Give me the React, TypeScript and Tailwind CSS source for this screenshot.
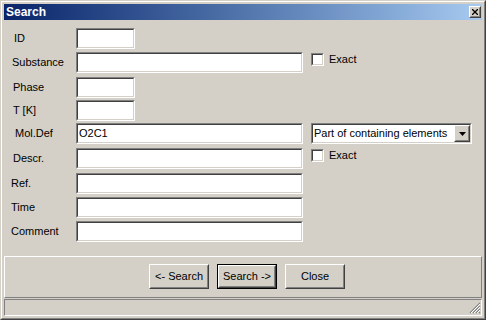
import type { ReactNode } from "react";

const font = "font-['Liberation_Sans',Arial,sans-serif] text-[11px] text-black";

type Row = {
  label: string;
  lp: string;
  mt: string;
  wide: boolean;
  value?: string;
  extra?: "exact" | "select";
};

const rows: Row[] = [
  { label: "ID", lp: "pl-[10px]", mt: "mt-[8px]", wide: false },
  { label: "Substance", lp: "pl-[8px]", mt: "mt-[3px]", wide: true, extra: "exact" },
  { label: "Phase", lp: "pl-[9px]", mt: "mt-[4px]", wide: false },
  { label: "T [K]", lp: "pl-[9px]", mt: "mt-[2px]", wide: false },
  { label: "Mol.Def", lp: "pl-[11px]", mt: "mt-[2px]", wide: true, value: "O2C1", extra: "select" },
  { label: "Descr.", lp: "pl-[9px]", mt: "mt-[4px]", wide: true, extra: "exact" },
  { label: "Ref.", lp: "pl-[7px]", mt: "mt-[4px]", wide: true },
  { label: "Time", lp: "pl-[7px]", mt: "mt-[3px]", wide: true },
  { label: "Comment", lp: "pl-[7px]", mt: "mt-[3px]", wide: true },
];

function Sunken({ className, children }: { className: string; children?: ReactNode }) {
  return (
    <div className={`${className} border border-t-[#808080] border-l-[#808080] border-b-white border-r-white`}>
      <div className="h-full border border-t-[#404040] border-l-[#404040] border-b-[#d4d0c8] border-r-[#d4d0c8] bg-white">
        {children}
      </div>
    </div>
  );
}

function Raised({ className, children }: { className: string; children?: ReactNode }) {
  return (
    <div className={`${className} border border-t-white border-l-white border-b-[#404040] border-r-[#404040] bg-[#d4d0c8]`}>
      <div className="h-full border border-t-[#d4d0c8] border-l-[#d4d0c8] border-b-[#808080] border-r-[#808080] flex items-center justify-center">
        {children}
      </div>
    </div>
  );
}

function Exact() {
  return (
    <div className="flex items-center self-start mt-[1px] ml-[8px]">
      <Sunken className="w-[13px] h-[13px]" />
      <span className="ml-[5px] leading-[13px]">Exact</span>
    </div>
  );
}

function Select() {
  return (
    <Sunken className="ml-[8px] w-[161px] h-[21px]">
      <div className="flex h-full">
        <span className="flex-1 pl-[1px] leading-[17px]">Part of containing elements</span>
        <Raised className="w-[16px] h-[17px]">
          <svg width="7" height="4" viewBox="0 0 7 4">
            <path d="M0 0h7L3.5 4z" fill="#000" />
          </svg>
        </Raised>
      </div>
    </Sunken>
  );
}

function FormRow({ row }: { row: Row }) {
  return (
    <div className={`flex items-center h-[21px] ${row.mt}`}>
      <div className={`w-[72px] shrink-0 ${row.lp}`}>{row.label}</div>
      <Sunken className={row.wide ? "w-[227px] h-[21px]" : "w-[59px] h-[21px]"}>
        <div className="pl-[1px] leading-[17px]">{row.value}</div>
      </Sunken>
      {row.extra === "exact" && <Exact />}
      {row.extra === "select" && <Select />}
    </div>
  );
}

function Grip() {
  return (
    <svg width="12" height="12" viewBox="0 0 12 12" className="self-end mb-[1px]">
      <path d="M11 1L1 11M11 4L4 11M11 7L7 11M11 10L10 11" stroke="#808080" strokeWidth="1.2" />
      <path d="M11 2L2 11M11 5L5 11M11 8L8 11" stroke="#fff" strokeWidth="1" />
    </svg>
  );
}

export default function App() {
  return (
    <div className={`w-[486px] h-[320px] ${font}`}>
      <div className="h-full border border-t-[#d4d0c8] border-l-[#d4d0c8] border-b-[#404040] border-r-[#404040]">
        <div className="h-full border border-t-white border-l-white border-b-[#808080] border-r-[#808080] bg-[#d4d0c8] p-[2px] flex flex-col">
          <div className="h-[16px] shrink-0 flex items-center justify-between bg-gradient-to-r from-[#0a246a] to-[#a6caf0] pl-[2px] pr-[1px]">
            <span className="font-bold text-white text-[12px] leading-[16px]">Search</span>
            <Raised className="w-[12px] h-[12px]">
              <svg width="6" height="6" viewBox="0 0 6 6">
                <path d="M0 0L6 6M6 0L0 6" stroke="#000" strokeWidth="1.3" />
              </svg>
            </Raised>
          </div>

          <div className="h-[236px] shrink-0 flex flex-col">
            {rows.map((r) => (
              <FormRow key={r.label} row={r} />
            ))}
          </div>

          <div className="h-[42px] shrink-0 border border-t-white border-l-white border-b-[#808080] border-r-[#808080] flex items-start pt-[7px] pl-[144px] gap-[8px]">
            <Raised className="w-[60px] h-[25px]">&lt;- Search</Raised>
            <div className="border border-black">
              <Raised className="w-[58px] h-[23px]">Search -&gt;</Raised>
            </div>
            <Raised className="w-[60px] h-[25px]">Close</Raised>
          </div>

          <div className="mt-[1px] h-[17px] shrink-0 border border-t-[#808080] border-l-[#808080] border-b-white border-r-white flex justify-end">
            <Grip />
          </div>
        </div>
      </div>
    </div>
  );
}
